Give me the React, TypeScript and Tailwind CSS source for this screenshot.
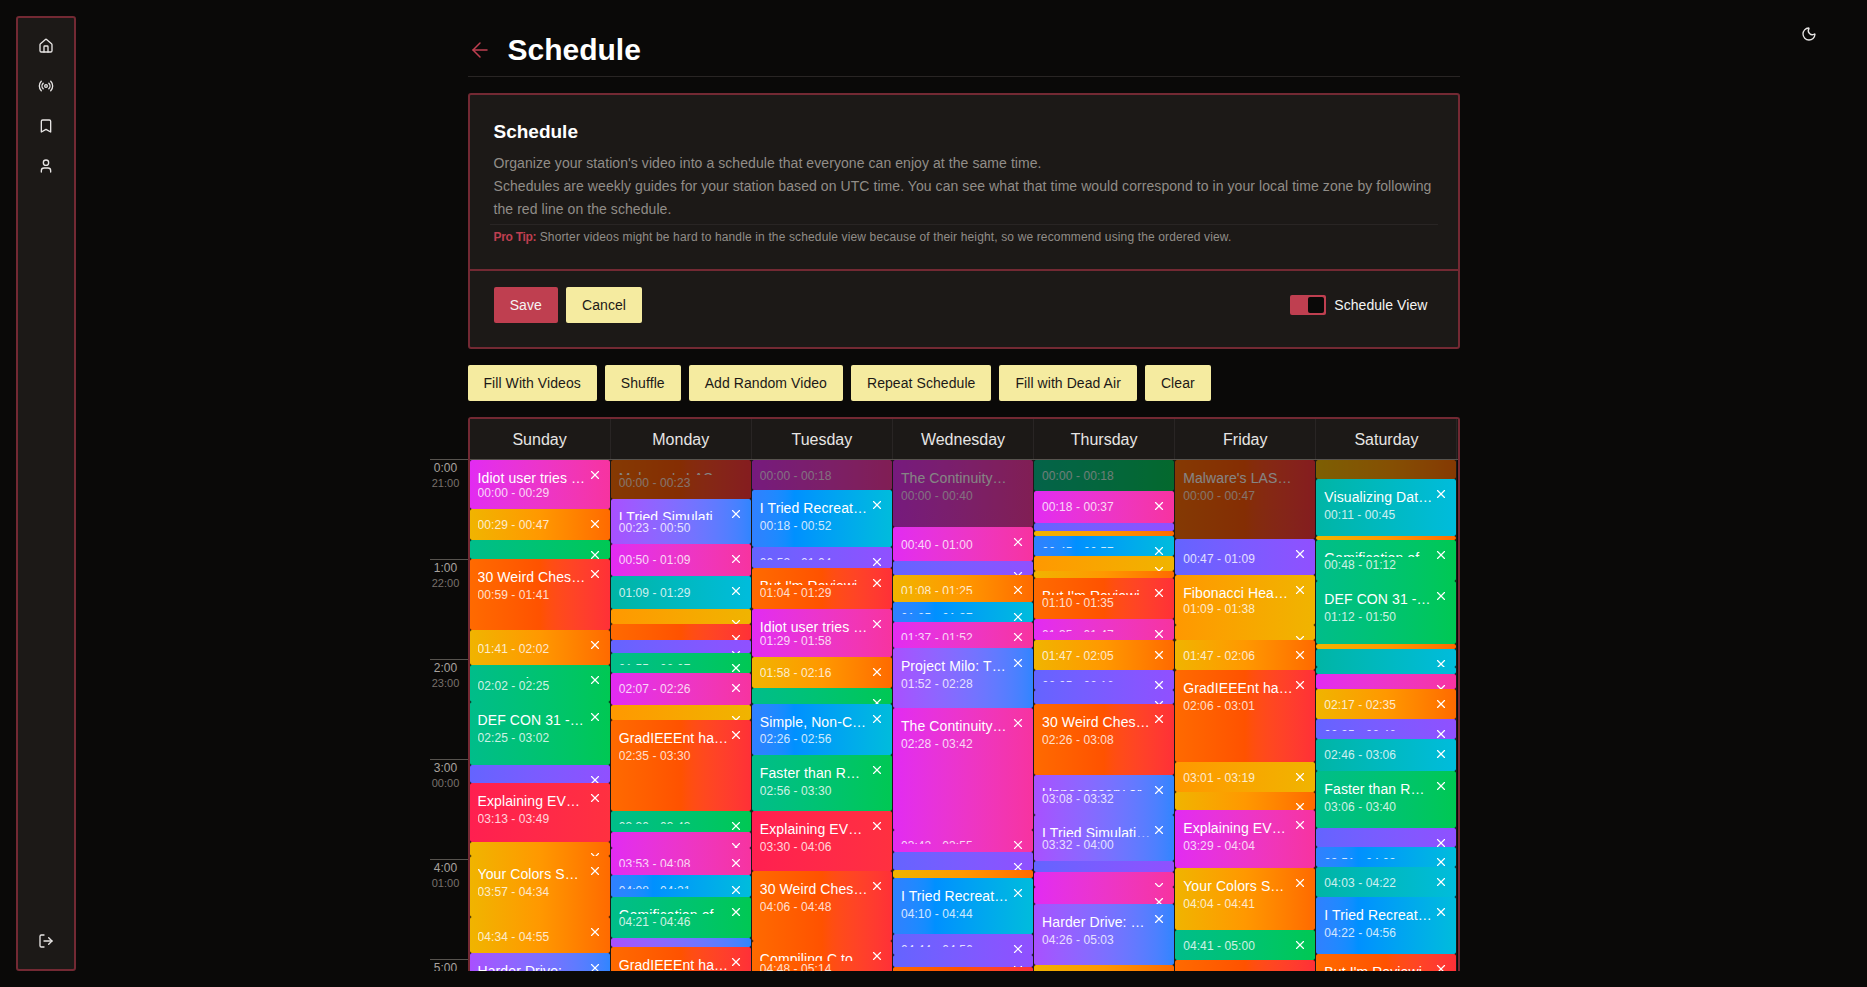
import { ArrowLeft, Bookmark, House, LogOut, Moon, Radio, User, X } from "lucide-react";

const G = {
  magenta: "bg-linear-to-r from-[#e22bf2] to-[#f733a0]",
  fire: "bg-linear-to-r from-[#ff6a00] via-[#ff5200] to-[#ff3037]",
  gold: "bg-linear-to-r from-[#f0b400] via-[#ff9800] to-[#ff6a00]",
  amber: "bg-linear-to-r from-[#ff9800] to-[#f0b400]",
  green: "bg-linear-to-r from-[#00bd8a] to-[#00c853]",
  teal: "bg-linear-to-r from-[#00b5a5] to-[#00bcdc]",
  blue: "bg-linear-to-r from-[#3080ff] via-[#0090ff] via-30% to-[#00bcdc]",
  violet: "bg-linear-to-r from-[#6464ff] to-[#9050ff]",
  purple: "bg-linear-to-r from-[#a850ff] to-[#3085ff]",
  red: "bg-linear-to-r from-[#ff1f50] to-[#ff3040]",
};

type Slot = [end: number, color: keyof typeof G, time: string, title: string, past?: boolean];

const IDIOT = "Idiot user tries …";
const WEIRD = "30 Weird Ches…";
const DEFCON = "DEF CON 31 -…";
const EV = "Explaining EV…";
const COLORS = "Your Colors S…";
const HARDER = "Harder Drive: …";
const MALWARE = "Malware's LAS…";
const SIM = "I Tried Simulati…";
const RECREATE = "I Tried Recreat…";
const GAME = "Gamification of…";
const GRAD = "GradIEEEnt ha…";
const REVIEW = "But I'm Reviewi…";
const CONT = "The Continuity…";
const FASTER = "Faster than R…";
const SIMPLE = "Simple, Non-C…";
const COMPILE = "Compiling C to…";
const MILO = "Project Milo: T…";
const FIB = "Fibonacci Hea…";
const VISUAL = "Visualizing Dat…";
const UNNEC = "Unnecessary or…";

const days: { name: string; slots: Slot[] }[] = [
  {
    name: "Sunday",
    slots: [
      [509, "magenta", "00:00 - 00:29", IDIOT],
      [540, "gold", "00:29 - 00:47", COLORS],
      [559, "green", "00:47 - 00:59", GAME],
      [630, "fire", "00:59 - 01:41", WEIRD],
      [665, "gold", "01:41 - 02:02", COLORS],
      [702, "green", "02:02 - 02:25", FASTER],
      [765, "green", "02:25 - 03:02", DEFCON],
      [783, "violet", "03:02 - 03:13", UNNEC],
      [842, "red", "03:13 - 03:49", EV],
      [856, "gold", "03:49 - 03:57", FIB],
      [917, "gold", "03:57 - 04:34", COLORS],
      [953, "gold", "04:34 - 04:55", FIB],
      [1015, "purple", "04:55 - 05:32", HARDER],
    ],
  },
  {
    name: "Monday",
    slots: [
      [499, "fire", "00:00 - 00:23", MALWARE, true],
      [544, "purple", "00:23 - 00:50", SIM],
      [576, "magenta", "00:50 - 01:09", IDIOT],
      [609, "teal", "01:09 - 01:29", VISUAL],
      [624, "amber", "01:29 - 01:37", FIB],
      [640, "fire", "01:37 - 01:47", WEIRD],
      [653, "violet", "01:47 - 01:55", UNNEC],
      [673, "green", "01:55 - 02:07", GAME],
      [705, "magenta", "02:07 - 02:26", CONT],
      [720, "amber", "02:26 - 02:35", FIB],
      [811, "fire", "02:35 - 03:30", GRAD],
      [832, "green", "03:30 - 03:43", GAME],
      [848, "magenta", "03:43 - 03:53", IDIOT],
      [875, "magenta", "03:53 - 04:08", EV],
      [897, "blue", "04:08 - 04:21", SIMPLE],
      [938, "green", "04:21 - 04:46", GAME],
      [947, "purple", "04:46 - 04:52", HARDER],
      [1040, "fire", "04:52 - 05:47", GRAD],
    ],
  },
  {
    name: "Tuesday",
    slots: [
      [490, "magenta", "00:00 - 00:18", IDIOT, true],
      [547, "blue", "00:18 - 00:52", RECREATE],
      [568, "violet", "00:52 - 01:04", UNNEC],
      [609, "fire", "01:04 - 01:29", REVIEW],
      [657, "magenta", "01:29 - 01:58", IDIOT],
      [688, "gold", "01:58 - 02:16", FIB],
      [704, "green", "02:16 - 02:26", GAME],
      [755, "blue", "02:26 - 02:56", SIMPLE],
      [811, "green", "02:56 - 03:30", FASTER],
      [871, "red", "03:30 - 04:06", EV],
      [941, "fire", "04:06 - 04:48", WEIRD],
      [985, "fire", "04:48 - 05:14", COMPILE],
    ],
  },
  {
    name: "Wednesday",
    slots: [
      [527, "magenta", "00:00 - 00:40", CONT, true],
      [561, "magenta", "00:40 - 01:00", IDIOT],
      [575, "violet", "01:00 - 01:08", UNNEC],
      [602, "gold", "01:08 - 01:25", COLORS],
      [622, "blue", "01:25 - 01:37", SIMPLE],
      [648, "magenta", "01:37 - 01:52", EV],
      [708, "purple", "01:52 - 02:28", MILO],
      [830, "magenta", "02:28 - 03:42", CONT],
      [852, "magenta", "03:42 - 03:55", IDIOT],
      [870, "violet", "03:55 - 04:06", UNNEC],
      [878, "gold", "04:06 - 04:10", FIB],
      [934, "blue", "04:10 - 04:44", RECREATE],
      [955, "violet", "04:44 - 04:56", UNNEC],
      [967, "violet", "04:56 - 05:03", UNNEC],
      [1010, "fire", "05:03 - 05:29", WEIRD],
    ],
  },
  {
    name: "Thursday",
    slots: [
      [491, "green", "00:00 - 00:18", GAME, true],
      [523, "magenta", "00:18 - 00:37", IDIOT],
      [531, "violet", "00:37 - 00:42", UNNEC],
      [536, "gold", "00:42 - 00:45", FIB],
      [556, "blue", "00:45 - 00:57", SIMPLE],
      [571, "amber", "00:57 - 01:06", FIB],
      [578, "gold", "01:06 - 01:10", COLORS],
      [619, "fire", "01:10 - 01:35", REVIEW],
      [640, "magenta", "01:35 - 01:47", EV],
      [670, "gold", "01:47 - 02:05", FIB],
      [690, "violet", "02:05 - 02:16", UNNEC],
      [704, "violet", "02:16 - 02:26", UNNEC],
      [775, "fire", "02:26 - 03:08", WEIRD],
      [815, "purple", "03:08 - 03:32", UNNEC],
      [861, "purple", "03:32 - 04:00", SIM],
      [872, "violet", "04:00 - 04:06", UNNEC],
      [887, "magenta", "04:06 - 04:15", IDIOT],
      [904, "magenta", "04:15 - 04:26", EV],
      [965, "purple", "04:26 - 05:03", HARDER],
      [1000, "gold", "05:03 - 05:24", COLORS],
    ],
  },
  {
    name: "Friday",
    slots: [
      [539, "fire", "00:00 - 00:47", MALWARE, true],
      [575, "violet", "00:47 - 01:09", UNNEC],
      [625, "amber", "01:09 - 01:38", FIB],
      [640, "amber", "01:38 - 01:47", FIB],
      [670, "gold", "01:47 - 02:06", COLORS],
      [762, "fire", "02:06 - 03:01", GRAD],
      [792, "amber", "03:01 - 03:19", FIB],
      [810, "gold", "03:19 - 03:29", COLORS],
      [868, "magenta", "03:29 - 04:04", EV],
      [930, "gold", "04:04 - 04:41", COLORS],
      [960, "green", "04:41 - 05:00", GAME],
      [1010, "fire", "05:00 - 05:30", COMPILE],
    ],
  },
  {
    name: "Saturday",
    slots: [
      [479, "gold", "00:00 - 00:11", FIB, true],
      [536, "teal", "00:11 - 00:45", VISUAL],
      [540, "gold", "00:45 - 00:48", FIB],
      [581, "green", "00:48 - 01:12", GAME],
      [644, "green", "01:12 - 01:50", DEFCON],
      [649, "gold", "01:50 - 01:53", FIB],
      [667, "teal", "01:53 - 02:03", VISUAL],
      [674, "teal", "02:03 - 02:08", VISUAL],
      [689, "magenta", "02:08 - 02:17", IDIOT],
      [719, "gold", "02:17 - 02:35", COLORS],
      [739, "violet", "02:35 - 02:46", UNNEC],
      [771, "teal", "02:46 - 03:06", VISUAL],
      [828, "green", "03:06 - 03:40", FASTER],
      [847, "violet", "03:40 - 03:51", UNNEC],
      [867, "blue", "03:51 - 04:03", SIMPLE],
      [897, "teal", "04:03 - 04:22", VISUAL],
      [954, "blue", "04:22 - 04:56", RECREATE],
      [1000, "fire", "04:56 - 05:24", REVIEW],
    ],
  },
];

const hours = [
  ["0:00", "21:00"],
  ["1:00", "22:00"],
  ["2:00", "23:00"],
  ["3:00", "00:00"],
  ["4:00", "01:00"],
  ["5:00", "02:00"],
];

const topActions = ["Fill With Videos", "Shuffle", "Add Random Video", "Repeat Schedule", "Fill with Dead Air", "Clear"];

const yellowButton = "h-9 px-4 rounded-[2px] bg-[#f5eba0] text-sm tracking-[0.07px] text-[#1c1917]";

const Sidebar = () => (
  <aside className="w-[60px] shrink-0 flex flex-col justify-between border-2 border-[#732933] rounded-[3px] bg-[#1c1917] pt-2 pb-2 text-[#e7e5e4]">
    <div className="flex flex-col">
      {[House, Radio, Bookmark, User].map((Icon, i) => (
        <div key={i} className="h-10 flex items-center justify-center">
          <Icon size={16} />
        </div>
      ))}
    </div>
    <div className="h-10 flex items-center justify-center">
      <LogOut size={16} />
    </div>
  </aside>
);

const Block = ({ height, slot }: { height: number; slot: Slot }) => {
  const [, color, time, title, past] = slot;
  return (
    <div className={`relative shrink-0 flex items-start px-2 rounded-[2px] text-white ${G[color]} ${past ? "opacity-50" : ""}`} style={{ height }}>
      <div className="mt-2 flex-1 min-w-0 h-[calc(100%-16px)] flex flex-col overflow-hidden">
        <div className="min-h-0 overflow-hidden whitespace-nowrap text-sm leading-5 tracking-[0.1px]">{title}</div>
        <div className="shrink-0 text-xs leading-4 tracking-[0.08px] opacity-80">{time}</div>
      </div>
      {!past && <X size={14} className="mt-2 shrink-0" />}
    </div>
  );
};

const DayColumn = ({ slots }: { slots: Slot[] }) => {
  let top = 460;
  return (
    <div className="flex flex-col border-r border-[#1c1917]">
      {slots.map((slot) => {
        const height = slot[0] - top;
        top = slot[0];
        return <Block key={slot[2]} height={height} slot={slot} />;
      })}
    </div>
  );
};

const ScheduleGrid = () => (
  <div className="border-2 border-b-0 border-[#732933] rounded-t-[3px]">
    <div className="grid grid-cols-7 h-[41px] bg-[#1c1917] border-b border-[#57534e]">
      {days.map((day) => (
        <div key={day.name} className="flex items-center justify-center pt-[2px] border-r border-[#292524] text-base text-[#e7e5e4]">
          {day.name}
        </div>
      ))}
    </div>
    <div className="relative grid grid-cols-7">
      <div className="absolute -top-px right-[calc(100%+2px)] w-[38px]">
        {hours.map(([utc, local]) => (
          <div key={utc} className="h-[100px] border-t border-[#57534e] pr-[6px] text-center">
            <div className="text-xs leading-4 text-[#a8a29e]">{utc}</div>
            <div className="text-[11px] leading-[14px] text-[#78716c]">{local}</div>
          </div>
        ))}
      </div>
      {days.map((day) => (
        <DayColumn key={day.name} slots={day.slots} />
      ))}
    </div>
  </div>
);

export default function App() {
  return (
    <div className="relative h-screen overflow-hidden flex p-4 bg-[#0a0908] [font-family:'Liberation_Sans',sans-serif]">
      <Sidebar />
      <Moon size={16} className="absolute top-[26px] right-[50px] text-[#e7e5e4]" />
      <main className="flex-1 overflow-hidden">
        <div className="w-[992px] mx-auto">
          <header className="flex items-center gap-4 pt-4 pb-2 mb-4 border-b border-[#292524]">
            <ArrowLeft size={24} strokeWidth={1.5} className="text-[#bf3f50]" />
            <h1 className="text-3xl leading-9 font-bold text-white">Schedule</h1>
          </header>

          <section className="border-2 border-[#732933] rounded-[3px] bg-[#1c1917]">
            <div className="h-[174px] pt-6 px-6">
              <h2 className="text-[19px] leading-[26px] font-bold text-white">Schedule</h2>
              <p className="mt-[7px] text-sm leading-[23px] tracking-[0.07px] text-[#918d88]">
                Organize your station's video into a schedule that everyone can enjoy at the same time.
                <br />
                Schedules are weekly guides for your station based on UTC time. You can see what that time would correspond to in your local time zone by following the red line on the schedule.
              </p>
              <div className="-mx-1 mt-[3px] border-t border-[#292524]" />
              <p className="mt-[3px] text-xs leading-[18px] tracking-[0.14px] text-[#918d88]">
                <span className="font-bold tracking-[-0.3px] text-[#bf3f50]">Pro Tip:</span> Shorter videos might be hard to handle in the schedule view because of their height, so we recommend using the ordered view.
              </p>
            </div>
            <div className="flex items-center justify-between border-t-2 border-[#732933] pt-4 pb-6 pl-6 pr-[30px]">
              <div className="flex gap-2">
                <button className="h-9 w-[64.5px] rounded-[2px] bg-[#bf3f50] text-sm text-[#f5f5f4]">Save</button>
                <button className={yellowButton}>Cancel</button>
              </div>
              <div className="flex items-center gap-2">
                <div className="w-9 h-5 flex justify-end items-center pr-[2px] rounded-[2px] bg-[#bf3f50]">
                  <div className="w-4 h-4 rounded-[2px] bg-[#0a0908]" />
                </div>
                <span className="text-sm tracking-[0.07px] text-[#f5f5f4]">Schedule View</span>
              </div>
            </div>
          </section>

          <div className="flex gap-2 my-4">
            {topActions.map((label) => (
              <button key={label} className={yellowButton}>
                {label}
              </button>
            ))}
          </div>

          <ScheduleGrid />
        </div>
      </main>
    </div>
  );
}
